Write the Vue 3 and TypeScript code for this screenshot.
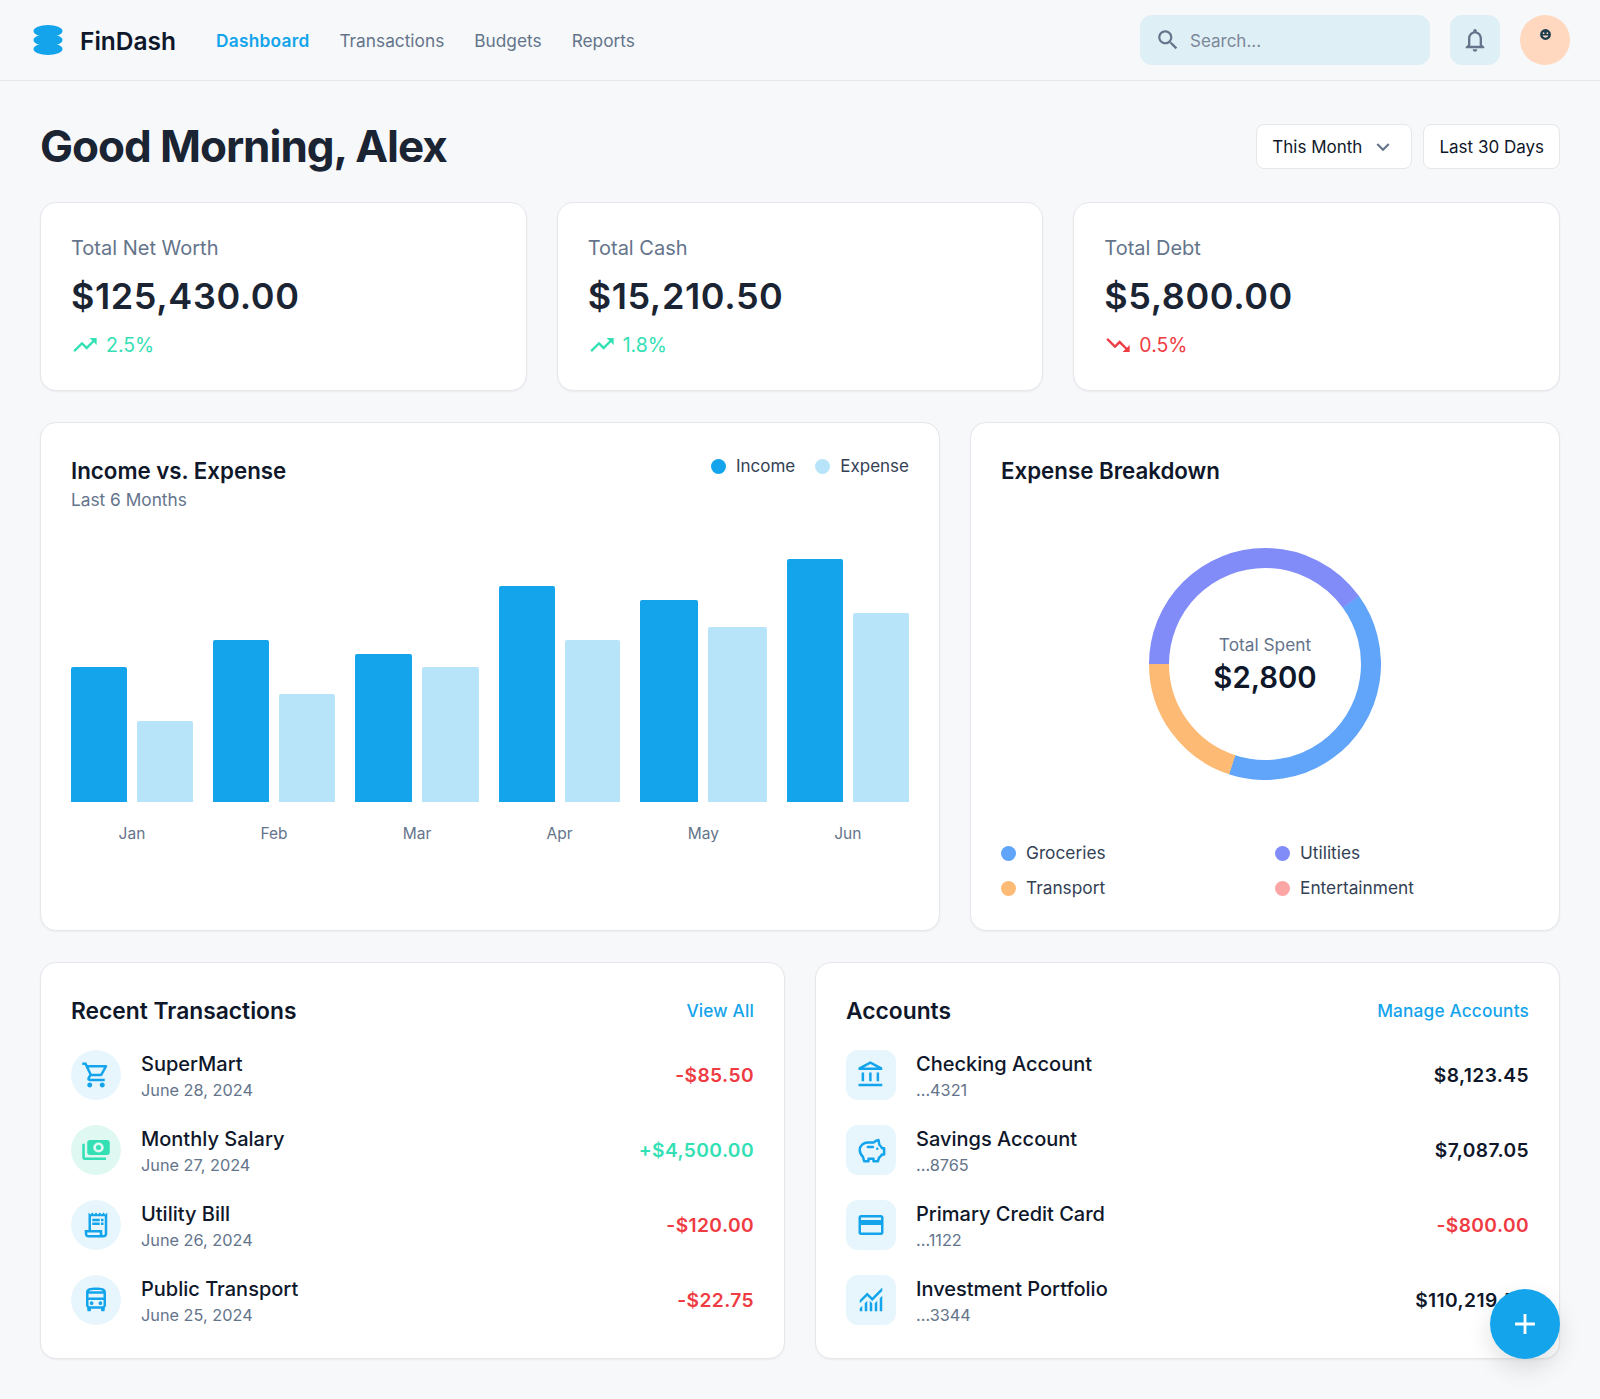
<template>
  <div class="page">
    <header class="topbar">
      <div class="topbar-left">
        <div class="brand">
          <svg class="logo" viewBox="0 0 30 30" aria-hidden="true">
            <ellipse cx="15" cy="6" rx="14.5" ry="6" />
            <ellipse cx="15" cy="15" rx="14.5" ry="6" />
            <ellipse cx="15" cy="24" rx="14.5" ry="6" />
          </svg>
          <span class="brand-name">FinDash</span>
        </div>
        <nav class="nav">
          <a v-for="item in navItems" :key="item" class="nav-link" :class="{ active: item === 'Dashboard' }">{{ item }}</a>
        </nav>
      </div>
      <div class="topbar-right">
        <div class="search">
          <svg class="search-icon" viewBox="0 0 24 24"><path :d="icons.search" /></svg>
          <span class="search-text">Search...</span>
        </div>
        <button class="bell">
          <svg viewBox="0 0 24 24"><path :d="icons.bell" /></svg>
        </button>
        <div class="avatar">
          <svg viewBox="0 0 24 24">
            <path d="M12 2a10 10 0 1 0 0 20 10 10 0 0 0 0-20zM8.5 8a1.6 1.6 0 1 1 0 3.2 1.6 1.6 0 0 1 0-3.2zm7 0a1.6 1.6 0 1 1 0 3.2 1.6 1.6 0 0 1 0-3.2zM12 18a6 6 0 0 1-5.5-4h11A6 6 0 0 1 12 18z" />
          </svg>
        </div>
      </div>
    </header>

    <main class="main">
      <div class="title-row">
        <h1>Good Morning, Alex</h1>
        <div class="filters">
          <button class="filter">
            <span>This Month</span>
            <svg viewBox="0 0 24 24"><path :d="icons.expand" /></svg>
          </button>
          <button class="filter"><span>Last 30 Days</span></button>
        </div>
      </div>

      <section class="stats">
        <div v-for="stat in stats" :key="stat.label" class="card stat">
          <p class="stat-label">{{ stat.label }}</p>
          <p class="stat-value">{{ stat.value }}</p>
          <p class="stat-delta" :class="stat.up ? 'up' : 'down'">
            <svg viewBox="0 0 24 24"><path :d="stat.up ? icons.trendUp : icons.trendDown" /></svg>
            {{ stat.delta }}
          </p>
        </div>
      </section>

      <section class="charts">
        <div class="card income">
          <div class="income-head">
            <div>
              <h2>Income vs. Expense</h2>
              <p class="sub">Last 6 Months</p>
            </div>
            <div class="legend">
              <span class="legend-item"><i class="dot income-dot"></i>Income</span>
              <span class="legend-item"><i class="dot expense-dot"></i>Expense</span>
            </div>
          </div>
          <div class="bars">
            <div v-for="m in months" :key="m.name" class="month">
              <div class="month-bars">
                <div class="bar in" :style="{ height: m.income + '%' }"></div>
                <div class="bar out" :style="{ height: m.expense + '%' }"></div>
              </div>
              <span class="month-name">{{ m.name }}</span>
            </div>
          </div>
        </div>

        <div class="card breakdown">
          <h2>Expense Breakdown</h2>
          <div class="donut">
            <svg viewBox="0 0 232 232">
              <circle
                v-for="seg in segments"
                :key="seg.color"
                cx="116"
                cy="116"
                :r="radius"
                fill="none"
                stroke-width="20"
                :stroke="seg.color"
                :stroke-dasharray="seg.dash"
                :transform="seg.rotate"
              />
            </svg>
            <div class="donut-center">
              <span class="donut-label">Total Spent</span>
              <span class="donut-value">$2,800</span>
            </div>
          </div>
          <div class="donut-legend">
            <span v-for="c in categories" :key="c.name" class="legend-item">
              <i class="dot" :style="{ background: c.color }"></i>{{ c.name }}
            </span>
          </div>
        </div>
      </section>

      <section class="lists">
        <div class="card list-card">
          <div class="list-head">
            <h2>Recent Transactions</h2>
            <a class="link">View All</a>
          </div>
          <ul class="rows">
            <li v-for="t in transactions" :key="t.name" class="row">
              <div class="row-icon round" :class="{ green: t.positive }">
                <svg viewBox="0 0 24 24" :class="{ mirror: t.positive }"><path :d="t.icon" /></svg>
              </div>
              <div class="row-text">
                <span class="row-name">{{ t.name }}</span>
                <span class="row-sub">{{ t.date }}</span>
              </div>
              <span class="row-amount" :class="t.positive ? 'pos' : 'neg'">{{ t.amount }}</span>
            </li>
          </ul>
        </div>

        <div class="card list-card">
          <div class="list-head">
            <h2>Accounts</h2>
            <a class="link">Manage Accounts</a>
          </div>
          <ul class="rows">
            <li v-for="a in accounts" :key="a.name" class="row">
              <div class="row-icon">
                <svg viewBox="0 0 24 24" :class="{ stroked: a.stroked }"><path :d="a.icon" /></svg>
              </div>
              <div class="row-text">
                <span class="row-name">{{ a.name }}</span>
                <span class="row-sub">{{ a.number }}</span>
              </div>
              <span class="row-amount" :class="{ neg: a.negative }">{{ a.balance }}</span>
            </li>
          </ul>
        </div>
      </section>
    </main>

    <button class="fab">
      <svg viewBox="0 0 24 24"><path :d="icons.add" /></svg>
    </button>
  </div>
</template>

<script setup lang="ts">
const icons = {
  search: 'M15.5 14h-.79l-.28-.27C15.41 12.59 16 11.11 16 9.5 16 5.91 13.09 3 9.5 3S3 5.91 3 9.5 5.91 16 9.5 16c1.61 0 3.09-.59 4.23-1.57l.27.28v.79l5 4.99L20.49 19l-4.99-5zm-6 0C7.01 14 5 11.99 5 9.5S7.01 5 9.5 5 14 7.01 14 9.5 11.99 14 9.5 14z',
  bell: 'M12 22c1.1 0 2-.9 2-2h-4c0 1.1.9 2 2 2zm6-6v-5c0-3.07-1.63-5.64-4.5-6.32V4c0-.83-.67-1.5-1.5-1.5s-1.5.67-1.5 1.5v.68C7.64 5.36 6 7.92 6 11v5l-2 2v1h16v-1l-2-2zm-2 1H8v-6c0-2.48 1.51-4.5 4-4.5s4 2.02 4 4.5v6z',
  expand: 'M16.59 8.59 12 13.17 7.41 8.59 6 10l6 6 6-6z',
  trendUp: 'M16 6l2.29 2.29-4.88 4.88-4-4L2 16.59 3.41 18l6-6 4 4 6.3-6.29L22 12V6z',
  trendDown: 'M16 18l2.29-2.29-4.88-4.88-4 4L2 7.41 3.41 6l6 6 4-4 6.3 6.29L22 12v6z',
  add: 'M19 13h-6v6h-2v-6H5v-2h6V5h2v6h6v2z',
  cart: 'M15.55 13c.75 0 1.41-.41 1.75-1.03l3.58-6.49A.996.996 0 0 0 20.01 4H5.21l-.94-2H1v2h2l3.6 7.59-1.35 2.44C4.52 15.37 5.48 17 7 17h12v-2H7l1.1-2h7.45zM6.16 6h12.15l-2.76 5H8.53L6.16 6zM7 18c-1.1 0-1.99.9-1.99 2S5.9 22 7 22s2-.9 2-2-.9-2-2-2zm10 0c-1.1 0-1.99.9-1.99 2s.89 2 1.99 2 2-.9 2-2-.9-2-2-2z',
  payments: 'M19 14V6c0-1.1-.9-2-2-2H3c-1.1 0-2 .9-2 2v8c0 1.1.9 2 2 2h14c1.1 0 2-.9 2-2zM10 6a4.2 4 0 1 0 0 8 4.2 4 0 0 0 0-8zm0 2a2 2 0 1 1 0 4 2 2 0 0 1 0-4zm13-1v11c0 1.1-.9 2-2 2H4v-2h17V7h2z',
  receipt: 'M19.5 3.5 18 2l-1.5 1.5L15 2l-1.5 1.5L12 2l-1.5 1.5L9 2 7.5 3.5 6 2v14H3v3c0 1.66 1.34 3 3 3h12c1.66 0 3-1.34 3-3V2l-1.5 1.5zM15 20H6c-.55 0-1-.45-1-1v-1h10v2zm4-1c0 .55-.45 1-1 1s-1-.45-1-1v-3H8V5h11v14zM9 7h6v2H9zm7 0h2v2h-2zM9 10h6v2H9zm7 0h2v2h-2z',
  bus: 'M12 2c-4.42 0-8 .5-8 4v10c0 .88.39 1.67 1 2.22V20c0 .55.45 1 1 1h1c.55 0 1-.45 1-1v-1h8v1c0 .55.45 1 1 1h1c.55 0 1-.45 1-1v-1.78c.61-.55 1-1.34 1-2.22V6c0-3.5-3.58-4-8-4zm5.66 2.99H6.34C6.89 4.46 8.31 4 12 4s5.11.46 5.66.99zm.34 2V10H6V6.99h12zm-.34 9.74-.29.27H6.63l-.29-.27C6.21 16.62 6 16.37 6 16v-4h12v4c0 .37-.21.62-.34.73zM8.5 13a1.5 1.5 0 1 0 0 3 1.5 1.5 0 0 0 0-3zm7 0a1.5 1.5 0 1 0 0 3 1.5 1.5 0 0 0 0-3z',
  bank: 'M6.5 10h-2v7h2v-7zm6 0h-2v7h2v-7zm8.5 9H2v2h19v-2zm-2.5-9h-2v7h2v-7zm-7-6.74L16.71 6H6.29l5.21-2.74m0-2.26L2 6v2h19V6l-9.5-5z',
  piggy: 'M18 4c-1.8.2-3 1-3.8 2H9.5C6 6 3 8.6 3 12c0 2.5 1.3 4.3 2.6 5.6L6.5 21H10v-2h4v2h3.5l1-3c1-.6 1.8-1.4 2.3-2.5h1.7v-5h-1.8c-.4-1-1.1-1.9-2-2.6zM9.5 9.5h4M17 11h.01',
  card: 'M20 4H4c-1.11 0-1.99.89-1.99 2L2 18c0 1.11.89 2 2 2h16c1.11 0 2-.89 2-2V6c0-1.11-.89-2-2-2zm0 14H4v-6h16v6zm0-10H4V6h16v2z',
  monitoring: 'M3 21v-2.5l2-2V21H3zm4 0v-6.5l2-2V21H7zm4 0v-8.5l2 2V21h-2zm4 0v-6.5l2-2V21h-2zm4 0v-10.5l2-2V21h-2zM3 14.5V12l6-6 4 4 8-8v2.8l-8 8-4-4-6 5.7z',
}

const navItems = ['Dashboard', 'Transactions', 'Budgets', 'Reports']

const stats = [
  { label: 'Total Net Worth', value: '$125,430.00', delta: '2.5%', up: true },
  { label: 'Total Cash', value: '$15,210.50', delta: '1.8%', up: true },
  { label: 'Total Debt', value: '$5,800.00', delta: '0.5%', up: false },
]

// bar heights as % of the chart area
const months = [
  { name: 'Jan', income: 50, expense: 30 },
  { name: 'Feb', income: 60, expense: 40 },
  { name: 'Mar', income: 55, expense: 50 },
  { name: 'Apr', income: 80, expense: 60 },
  { name: 'May', income: 75, expense: 65 },
  { name: 'Jun', income: 90, expense: 70 },
]

const categories = [
  { name: 'Groceries', color: '#60a5fa' },
  { name: 'Utilities', color: '#818cf8' },
  { name: 'Transport', color: '#fdba74' },
  { name: 'Entertainment', color: '#fca5a5' },
]

const radius = 106
const circ = 2 * Math.PI * radius
// angles in degrees, 0 is 3 o'clock, clockwise
const arcs: [string, number, number][] = [
  ['#60a5fa', -36, 144],
  ['#fdba74', 108, 72],
  ['#818cf8', 180, 144],
]
const segments = arcs.map(([color, start, sweep]) => ({
  color,
  dash: `${(sweep / 360) * circ} ${circ}`,
  rotate: `rotate(${start} 116 116)`,
}))

const transactions = [
  { name: 'SuperMart', date: 'June 28, 2024', amount: '-$85.50', icon: icons.cart, positive: false },
  { name: 'Monthly Salary', date: 'June 27, 2024', amount: '+$4,500.00', icon: icons.payments, positive: true },
  { name: 'Utility Bill', date: 'June 26, 2024', amount: '-$120.00', icon: icons.receipt, positive: false },
  { name: 'Public Transport', date: 'June 25, 2024', amount: '-$22.75', icon: icons.bus, positive: false },
]

const accounts = [
  { name: 'Checking Account', number: '...4321', balance: '$8,123.45', icon: icons.bank, negative: false, stroked: false },
  { name: 'Savings Account', number: '...8765', balance: '$7,087.05', icon: icons.piggy, negative: false, stroked: true },
  { name: 'Primary Credit Card', number: '...1122', balance: '-$800.00', icon: icons.card, negative: true, stroked: false },
  { name: 'Investment Portfolio', number: '...3344', balance: '$110,219.50', icon: icons.monitoring, negative: false, stroked: false },
]
</script>

<style>
html,
body {
  margin: 0;
  background: #f6f8fa;
}
</style>

<style scoped>
.page {
  min-height: 1399px;
  background: #f6f8fa;
  color: #0f172a;
  font-family: Inter, "Liberation Sans", sans-serif;
  font-size: 16px;
}

p,
h1,
h2,
ul {
  margin: 0;
  padding: 0;
}

button {
  font-family: inherit;
  cursor: pointer;
}

/* top bar */
.topbar {
  display: flex;
  align-items: center;
  justify-content: space-between;
  height: 81px;
  box-sizing: border-box;
  padding: 0 30px 0 33px;
  border-bottom: 1px solid #e5e7eb;
}

.topbar-left,
.topbar-right,
.brand,
.nav {
  display: flex;
  align-items: center;
}

.brand {
  gap: 17px;
}

.logo {
  width: 30px;
  height: 30px;
  fill: #13a4ec;
}

.brand-name {
  margin-top: 1px;
  font-size: 24.5px;
  font-weight: 600;
  color: #0f172a;
}

.nav {
  gap: 30px;
  margin-left: 40px;
  padding-top: 1px;
}

.nav-link {
  font-size: 17.3px;
  color: #64748b;
}

.nav-link.active {
  color: #13a4ec;
  font-weight: 600;
  letter-spacing: 0.25px;
}

.topbar-right {
  gap: 20px;
}

.search {
  display: flex;
  align-items: center;
  gap: 9px;
  width: 290px;
  height: 50px;
  box-sizing: border-box;
  padding: 0 15px;
  border-radius: 12px;
  background: #dfeff6;
  color: #7c8798;
  font-size: 17px;
}

.search-text {
  padding-top: 2px;
}

.search-icon {
  width: 26px;
  height: 26px;
  fill: #64748b;
}

.bell {
  display: flex;
  align-items: center;
  justify-content: center;
  width: 50px;
  height: 50px;
  padding: 0;
  border: none;
  border-radius: 12px;
  background: #dfeff6;
}

.bell svg {
  width: 28px;
  height: 28px;
  fill: #64748b;
}

.avatar {
  display: flex;
  justify-content: center;
  width: 50px;
  height: 50px;
  padding-top: 13px;
  box-sizing: border-box;
  border-radius: 50%;
  background: #ffd8bf;
}

.avatar svg {
  width: 13px;
  height: 13px;
  fill: #1d3c4d;
}

/* page */
.main {
  padding: 40px 40px 0;
}

.title-row {
  display: flex;
  align-items: flex-start;
  justify-content: space-between;
  height: 81px;
}

h1 {
  font-size: 44px;
  line-height: 50px;
  font-weight: 700;
  letter-spacing: -1.03px;
  color: #1a2433;
}

.filters {
  display: flex;
  gap: 11px;
  margin-top: 3px;
}

.filter {
  display: flex;
  align-items: center;
  gap: 8px;
  height: 45px;
  padding: 0 15px;
  background: #fff;
  border: 1px solid #e5e7eb;
  border-radius: 8px;
  color: #0f172a;
  font-size: 17px;
}

.filter span {
  padding-top: 1px;
}

.filter svg {
  width: 26px;
  height: 26px;
  fill: #64748b;
}

.card {
  box-sizing: border-box;
  padding: 30px;
  background: #fff;
  border: 1px solid #e5e7eb;
  border-radius: 16px;
  box-shadow: 0 1px 2px rgba(0, 0, 0, 0.05);
}

h2 {
  padding-top: 2px;
  font-size: 22.3px;
  line-height: 32px;
  font-weight: 600;
  color: #0f172a;
}

/* stats */
.stats {
  display: grid;
  grid-template-columns: repeat(3, 1fr);
  gap: 30px;
  margin-bottom: 31px;
}

.stat {
  height: 189px;
}

.stat-label {
  font-size: 20px;
  line-height: 30px;
  color: #64748b;
}

.stat-value {
  margin-top: 8px;
  font-size: 36px;
  line-height: 50px;
  font-weight: 600;
  letter-spacing: 0.6px;
  color: #1a2433;
}

.stat-delta {
  display: flex;
  align-items: center;
  gap: 7px;
  margin-top: 9px;
  font-size: 19.5px;
  line-height: 30px;
}

.stat-delta svg {
  width: 28px;
  height: 28px;
  fill: currentColor;
}

.up {
  color: #33e0b4;
}

.down {
  color: #ef3b42;
}

/* charts */
.charts {
  display: grid;
  grid-template-columns: 1fr 590px;
  gap: 30px;
  margin-bottom: 31px;
}

.income,
.breakdown {
  height: 509px;
}

.income-head {
  display: flex;
  justify-content: space-between;
  align-items: flex-start;
}

.sub {
  font-size: 17.3px;
  line-height: 26px;
  color: #64748b;
}

.legend {
  display: flex;
  gap: 20px;
  margin-top: 2px;
}

.legend-item {
  display: flex;
  align-items: center;
  gap: 10px;
  font-size: 17.3px;
  line-height: 24px;
  color: #334155;
}

.legend .legend-item {
  font-size: 17px;
  line-height: 22px;
}

.dot {
  width: 15px;
  height: 15px;
  border-radius: 50%;
}

.income-dot {
  background: #13a4ec;
}

.expense-dot {
  background: #b8e4f9;
}

.bars {
  display: flex;
  gap: 20px;
  margin-top: 19px;
}

.month {
  flex: 1 1 auto;
  display: flex;
  flex-direction: column;
  align-items: center;
}

.month-bars {
  display: flex;
  align-items: flex-end;
  gap: 10px;
  width: 100%;
  height: 270px;
}

.bar {
  flex: 1;
  border-radius: 2px 2px 0 0;
}

.bar.in {
  background: #13a4ec;
}

.bar.out {
  background: #b8e4f9;
}

.month-name {
  margin-top: 20px;
  font-size: 15.5px;
  line-height: 24px;
  color: #64748b;
}

/* donut */
.donut {
  position: relative;
  width: 232px;
  height: 232px;
  margin: 61px auto 0;
}

.donut svg {
  display: block;
  width: 232px;
  height: 232px;
}

.donut-center {
  position: absolute;
  inset: 0;
  display: flex;
  flex-direction: column;
  align-items: center;
  justify-content: center;
  padding-top: 2px;
  box-sizing: border-box;
}

.donut-label {
  font-size: 17.3px;
  line-height: 26px;
  color: #64748b;
}

.donut-value {
  font-size: 29.3px;
  line-height: 40px;
  font-weight: 600;
  color: #0f172a;
}

.donut-legend {
  display: grid;
  grid-template-columns: 1fr 1fr;
  gap: 11px 20px;
  margin-top: 61px;
}

/* lists */
.lists {
  display: grid;
  grid-template-columns: 1fr 1fr;
  gap: 30px;
}

.list-card {
  height: 397px;
}

.list-head {
  display: flex;
  justify-content: space-between;
  align-items: center;
}

.list-head h2 {
  font-size: 22.8px;
}

.link {
  color: #13a4ec;
  font-size: 17.3px;
  font-weight: 500;
  letter-spacing: 0.15px;
}

.rows {
  display: flex;
  flex-direction: column;
  gap: 25px;
  margin-top: 23px;
  list-style: none;
}

.row {
  display: flex;
  align-items: center;
  gap: 20px;
  height: 50px;
}

.row-icon {
  display: flex;
  align-items: center;
  justify-content: center;
  flex: none;
  width: 50px;
  height: 50px;
  border-radius: 12px;
  background: #e7f6fd;
}

.row-icon.round {
  border-radius: 50%;
}

.row-icon.green {
  background: #dff8f1;
}

.row-icon svg {
  width: 30px;
  height: 30px;
  fill: #13a4ec;
}

.row-icon svg.stroked {
  fill: none;
  stroke: #13a4ec;
  stroke-width: 2;
  stroke-linecap: round;
  stroke-linejoin: round;
}

.row-icon.green svg {
  fill: #33e0b4;
}

.mirror {
  transform: scaleX(-1);
  fill-rule: evenodd;
}

.row-text {
  display: flex;
  flex-direction: column;
  flex: 1;
  padding-top: 3px;
  box-sizing: border-box;
}

.row-name {
  font-size: 20px;
  line-height: 26px;
  font-weight: 500;
  color: #0f172a;
}

.row-sub {
  margin-top: 1px;
  font-size: 16.3px;
  line-height: 25px;
  color: #64748b;
}

.row-amount {
  font-size: 19.2px;
  font-weight: 600;
  letter-spacing: 0.4px;
  color: #0f172a;
}

.pos {
  color: #33e0b4;
}

.neg {
  color: #ef3b42;
}

.fab {
  position: fixed;
  right: 40px;
  bottom: 40px;
  display: flex;
  align-items: center;
  justify-content: center;
  width: 70px;
  height: 70px;
  padding: 0;
  border: none;
  border-radius: 50%;
  background: #13a4ec;
  box-shadow: 0 10px 25px rgba(0, 0, 0, 0.12);
}

.fab svg {
  width: 34px;
  height: 34px;
  fill: #fff;
}
</style>
